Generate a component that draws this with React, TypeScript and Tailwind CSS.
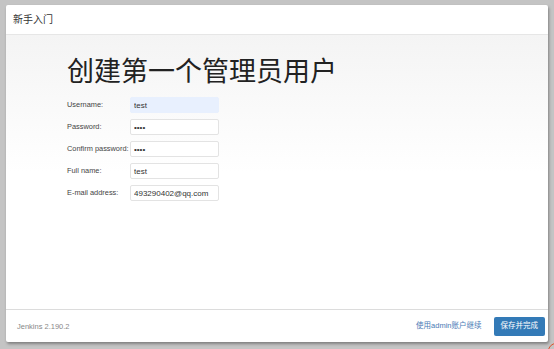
import React from 'react';

const FONT = '"Liberation Sans", "Noto Sans CJK SC", sans-serif';

const FIELDS = [
    { label: 'Username:', value: 'test', type: 'text', filled: true },
    { label: 'Password:', value: 'test', type: 'password', filled: false },
    { label: 'Confirm password:', value: 'test', type: 'password', filled: false },
    { label: 'Full name:', value: 'test', type: 'text', filled: false },
    { label: 'E-mail address:', value: '493290402@qq.com', type: 'text', filled: false },
];

export default function App() {
    return (
        <div className="w-[554px] h-[349px] bg-[#c4c4c4] pt-[5px] pl-[6px] relative overflow-hidden" style={{ fontFamily: FONT }}>
            <div className="w-[542px] h-[337px] bg-white rounded-[2px] shadow-[1px_2px_3px_rgba(0,0,0,0.35)] flex flex-col">
                {/* Header */}
                <div className="h-[30px] border-b border-[#e6e6e6] flex items-center px-[7px]">
                    <span className="text-[10px] text-[#333]">新手入门</span>
                </div>

                {/* Body */}
                <div className="flex-1 bg-gradient-to-b from-[#f4f4f4] via-white to-white pl-[61px] pt-[19px]">
                    <h1 className="text-[27px] leading-[36px] text-[#222] mb-[7px]">创建第一个管理员用户</h1>
                    <div className="flex flex-col gap-[6px]">
                        {FIELDS.map((f) => (
                            <div key={f.label} className="flex items-center">
                                <span className="w-[63px] text-[7.4px] text-[#444] whitespace-nowrap">{f.label}</span>
                                <input
                                    readOnly
                                    type={f.type}
                                    value={f.value}
                                    className={`w-[89px] h-[16px] px-[3px] text-[8px] text-[#333] border rounded-[2px] outline-none ${f.filled ? 'bg-[#e8f0fe] border-[#e8f0fe]' : 'bg-white border-[#e3e3e3]'}`}
                                    style={{ fontFamily: FONT }}
                                />
                            </div>
                        ))}
                    </div>
                </div>

                {/* Footer */}
                <div className="h-[33px] border-t border-[#dcdcdc] flex items-center justify-between pl-[11px] pr-[3px]">
                    <span className="text-[7.5px] text-[#888] pt-[2px]">Jenkins 2.190.2</span>
                    <div className="flex items-center gap-[12px]">
                        <span className="text-[7.5px] text-[#4a7ab5]">使用admin账户继续</span>
                        <button className="h-[19px] px-[7px] bg-[#337ab7] rounded-[2px] text-[7.5px] text-white">保存并完成</button>
                    </div>
                </div>
            </div>
            {/* annotation mark */}
            <div className="absolute right-[-10px] bottom-[-10px] w-[16px] h-[16px] rounded-full border-[1.5px] border-[#e0502a]" />
        </div>
    );
}
